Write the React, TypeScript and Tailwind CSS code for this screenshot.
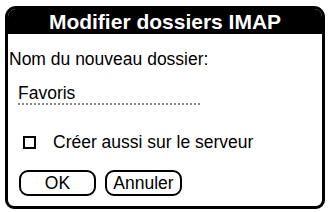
export default function App() {
  return (
    <div className="w-[329px] h-[212px] bg-white pt-[6px] pl-[5px] font-['Liberation_Sans',Arial,sans-serif] text-black">
      <div className="w-[320px] h-[203px] border-[3px] border-black rounded-[9px] rounded-t-[11px] flex flex-col overflow-hidden">
        <div className="h-[25px] shrink-0 bg-black text-white font-bold text-[21px] leading-[25px] text-center">
          Modifier dossiers IMAP
        </div>
        <div className="flex flex-col text-[17.5px] leading-[20px]">
          <div className="mt-[15px] pl-[1px]">Nom du nouveau dossier:</div>
          <div className="mt-[14px] ml-[10px] w-[182px] border-b-2 border-dotted border-[#888]">
            Favoris
          </div>
          <label className="mt-[27px] ml-[15px] flex items-center gap-[17px]">
            <span className="w-[13px] h-[13px] shrink-0 border-2 border-black" />
            <span>Créer aussi sur le serveur</span>
          </label>
          <div className="mt-[18px] ml-[11px] flex gap-[9px]">
            <button className="w-[77px] h-[26px] border-2 border-black rounded-[9px] leading-[22px]">
              OK
            </button>
            <button className="w-[77px] h-[26px] border-2 border-black rounded-[9px] leading-[22px]">
              Annuler
            </button>
          </div>
        </div>
      </div>
    </div>
  )
}
